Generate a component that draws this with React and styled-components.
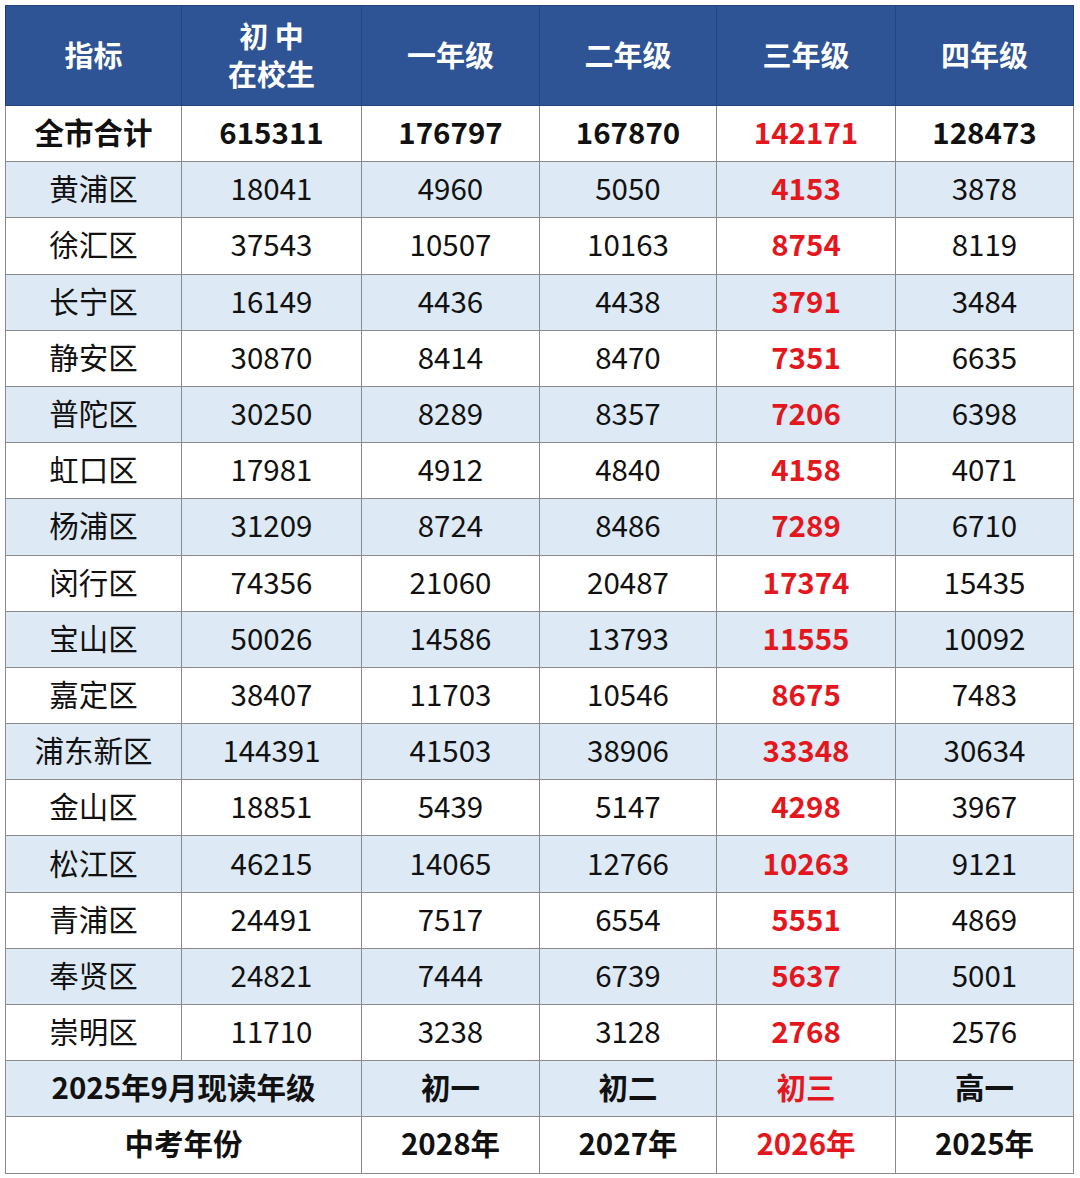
import React from "react";
import styled, { createGlobalStyle } from "styled-components";

const GlobalStyle = createGlobalStyle`
  body {
    margin: 0;
    background: #ffffff;
    font-family: "Noto Sans CJK SC", "Noto Sans", sans-serif;
  }
`;

const Page = styled.div`
  padding: 5px 7px 5px 5px;
`;

const Table = styled.table`
  width: 1068px;
  border-collapse: collapse;
  table-layout: fixed;
`;

const HeadCell = styled.th`
  box-sizing: border-box;
  background: #2e5496;
  color: #ffffff;
  font-size: 29px;
  font-weight: 700;
  line-height: 38px;
  height: 100px;
  padding: 0 0 4px;
  border: 1px solid #24457f;
  border-left-color: #1e3a6b;
`;

const Row = styled.tr`
  background: ${p => (p.$shade ? "#dde9f5" : "#ffffff")};
`;

const Cell = styled.td`
  box-sizing: border-box;
  height: 56.2px;
  padding: 0 0 5px;
  text-align: center;
  font-size: 29.5px;
  font-weight: ${p => (p.$bold ? 700 : 400)};
  color: ${p => (p.$red ? "#e3171d" : "#111111")};
  border: 1px solid #8a8a8a;
  white-space: nowrap;
`;

const widths = [176, 180, 178, 177, 179, 178];

const total = ["全市合计", "615311", "176797", "167870", "142171", "128473"];

const districts = [
  ["黄浦区", "18041", "4960", "5050", "4153", "3878"],
  ["徐汇区", "37543", "10507", "10163", "8754", "8119"],
  ["长宁区", "16149", "4436", "4438", "3791", "3484"],
  ["静安区", "30870", "8414", "8470", "7351", "6635"],
  ["普陀区", "30250", "8289", "8357", "7206", "6398"],
  ["虹口区", "17981", "4912", "4840", "4158", "4071"],
  ["杨浦区", "31209", "8724", "8486", "7289", "6710"],
  ["闵行区", "74356", "21060", "20487", "17374", "15435"],
  ["宝山区", "50026", "14586", "13793", "11555", "10092"],
  ["嘉定区", "38407", "11703", "10546", "8675", "7483"],
  ["浦东新区", "144391", "41503", "38906", "33348", "30634"],
  ["金山区", "18851", "5439", "5147", "4298", "3967"],
  ["松江区", "46215", "14065", "12766", "10263", "9121"],
  ["青浦区", "24491", "7517", "6554", "5551", "4869"],
  ["奉贤区", "24821", "7444", "6739", "5637", "5001"],
  ["崇明区", "11710", "3238", "3128", "2768", "2576"],
];

const footer = [
  { label: "2025年9月现读年级", values: ["初一", "初二", "初三", "高一"], shade: true },
  { label: "中考年份", values: ["2028年", "2027年", "2026年", "2025年"], shade: false },
];

export default function App() {
  return (
    <Page>
      <GlobalStyle />
      <Table>
        <colgroup>
          {widths.map((w, i) => (
            <col key={i} style={{ width: w }} />
          ))}
        </colgroup>
        <thead>
          <tr>
            <HeadCell>指标</HeadCell>
            <HeadCell>
              初 中<br />在校生
            </HeadCell>
            <HeadCell>一年级</HeadCell>
            <HeadCell>二年级</HeadCell>
            <HeadCell>三年级</HeadCell>
            <HeadCell>四年级</HeadCell>
          </tr>
        </thead>
        <tbody>
          <Row>
            {total.map((v, i) => (
              <Cell key={i} $bold $red={i === 4}>
                {v}
              </Cell>
            ))}
          </Row>
          {districts.map((row, r) => (
            <Row key={row[0]} $shade={r % 2 === 0}>
              {row.map((v, i) => (
                <Cell key={i} $bold={i === 4} $red={i === 4}>
                  {v}
                </Cell>
              ))}
            </Row>
          ))}
          {footer.map(f => (
            <Row key={f.label} $shade={f.shade}>
              <Cell colSpan={2} $bold>
                {f.label}
              </Cell>
              {f.values.map((v, i) => (
                <Cell key={i} $bold $red={i === 2}>
                  {v}
                </Cell>
              ))}
            </Row>
          ))}
        </tbody>
      </Table>
    </Page>
  );
}
